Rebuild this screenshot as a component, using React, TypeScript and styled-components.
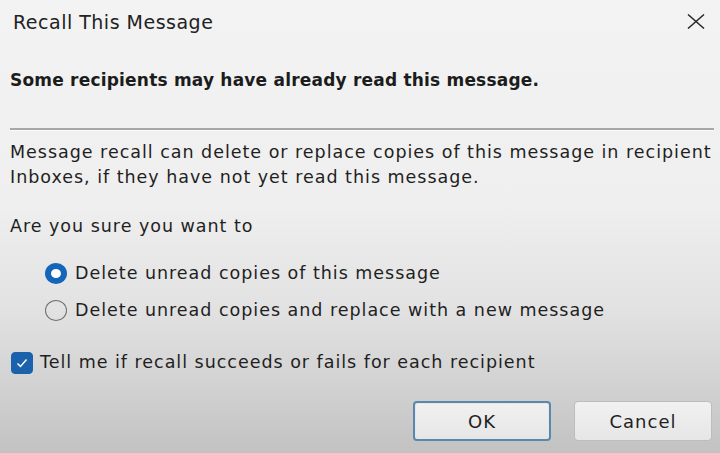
import React, { useState } from 'react';
import styled, { createGlobalStyle } from 'styled-components';

const GlobalStyle = createGlobalStyle`
  html, body {
    margin: 0;
    padding: 0;
    width: 720px;
    height: 453px;
    overflow: hidden;
  }
  body {
    font-family: 'DejaVu Sans', 'Open Sans', sans-serif;
    color: #1f1f1f;
  }
`;

export default function App() {
  const [choice, setChoice] = useState<'delete' | 'replace'>('delete');
  const [notify, setNotify] = useState(true);

  return (
    <>
      <GlobalStyle />
      <Dialog>
        <TitleBar>
          <Title>Recall This Message</Title>
          <CloseButton aria-label="Close">
            <svg width="18" height="15" viewBox="0 0 18 15">
              <path d="M1 0.5 L17 14.5 M17 0.5 L1 14.5" stroke="#2a2a2a" strokeWidth="1.5" fill="none" />
            </svg>
          </CloseButton>
        </TitleBar>
        <Warning>Some recipients may have already read this message.</Warning>
        <Divider />
        <Body>
          Message recall can delete or replace copies of this message in recipient
          <br />
          Inboxes, if they have not yet read this message.
        </Body>
        <Question>Are you sure you want to</Question>
        <Options>
          <Option onClick={() => setChoice('delete')}>
            <Radio checked={choice === 'delete'} />
            Delete unread copies of this message
          </Option>
          <Option onClick={() => setChoice('replace')}>
            <Radio checked={choice === 'replace'} />
            Delete unread copies and replace with a new message
          </Option>
        </Options>
        <CheckRow onClick={() => setNotify(!notify)}>
          <CheckBox checked={notify}>
            {notify && (
              <svg width="14" height="14" viewBox="0 0 14 14">
                <path d="M2.5 7.5 L5.5 10.5 L11.5 3.5" stroke="#fff" strokeWidth="1.5" fill="none" />
              </svg>
            )}
          </CheckBox>
          Tell me if recall succeeds or fails for each recipient
        </CheckRow>
        <Footer>
          <Button primary>OK</Button>
          <Button>Cancel</Button>
        </Footer>
      </Dialog>
    </>
  );
}

const Dialog = styled.div`
  width: 720px;
  height: 453px;
  box-sizing: border-box;
  display: flex;
  flex-direction: column;
  padding: 0 6px 0 10px;
  background: linear-gradient(
    to bottom,
    #f3f3f3 0%,
    #efefef 45%,
    #e2e2e2 68%,
    #d2d2d2 85%,
    #c2c2c2 100%
  );
`;

const TitleBar = styled.div`
  height: 42px;
  display: flex;
  align-items: center;
  justify-content: space-between;
`;

const Title = styled.div`
  font-size: 19px;
  padding-left: 3px;
  padding-top: 1px;
  letter-spacing: 0.5px;
  color: #222;
`;

const CloseButton = styled.div`
  width: 18px;
  height: 15px;
  margin-right: 9px;
  display: flex;
`;

const Warning = styled.div`
  margin-top: 25px;
  font-size: 17px;
  font-weight: 700;
  letter-spacing: 0.2px;
  color: #1c1c1c;
  line-height: 26px;
`;

const Divider = styled.div`
  margin-top: 35px;
  height: 2px;
  background: #a8a8a8;
  border-bottom: 1px solid #fafafa;
`;

const Text = styled.div`
  font-size: 17.5px;
  line-height: 25px;
  letter-spacing: 0.98px;
`;

const Body = styled(Text)`
  margin-top: 9px;
`;

const Question = styled(Text)`
  margin-top: 24px;
`;

const Options = styled.div`
  margin-top: 22px;
  padding-left: 35px;
  display: flex;
  flex-direction: column;
  gap: 12px;
`;

const Option = styled(Text)`
  display: flex;
  align-items: center;
  gap: 8px;
  cursor: default;
`;

const Radio = styled.span<{ checked?: boolean }>`
  width: 22px;
  height: 21px;
  box-sizing: border-box;
  border-radius: 50%;
  flex-shrink: 0;
  border: ${(p) => (p.checked ? '6.5px solid #1565b8' : '1.6px solid #6e6e6e')};
  background: ${(p) => (p.checked ? '#ffffff' : 'transparent')};
`;

const CheckRow = styled(Text)`
  margin-top: 27px;
  padding-left: 1px;
  display: flex;
  align-items: center;
  gap: 7px;
`;

const CheckBox = styled.span<{ checked?: boolean }>`
  width: 22px;
  height: 22px;
  border-radius: 4px;
  box-sizing: border-box;
  flex-shrink: 0;
  display: flex;
  align-items: center;
  justify-content: center;
  background: ${(p) => (p.checked ? '#1b62ad' : '#fff')};
  border: 1px solid ${(p) => (p.checked ? '#1b62ad' : '#777')};
`;

const Footer = styled.div`
  margin-top: 26px;
  display: flex;
  justify-content: flex-end;
  gap: 23px;
  padding-right: 2px;
`;

const Button = styled.button<{ primary?: boolean }>`
  width: 138px;
  height: 40px;
  box-sizing: border-box;
  border-radius: 4px;
  font-family: inherit;
  font-size: 18px;
  letter-spacing: 1px;
  color: #1f1f1f;
  background: linear-gradient(to bottom, #f1f1f1, #e6e6e6);
  border: ${(p) => (p.primary ? '2px solid #5c87a8' : '1px solid #bdbdbd')};
  box-shadow: ${(p) => (p.primary ? 'inset 0 0 0 1px #dfe8ef' : 'none')};
`;
